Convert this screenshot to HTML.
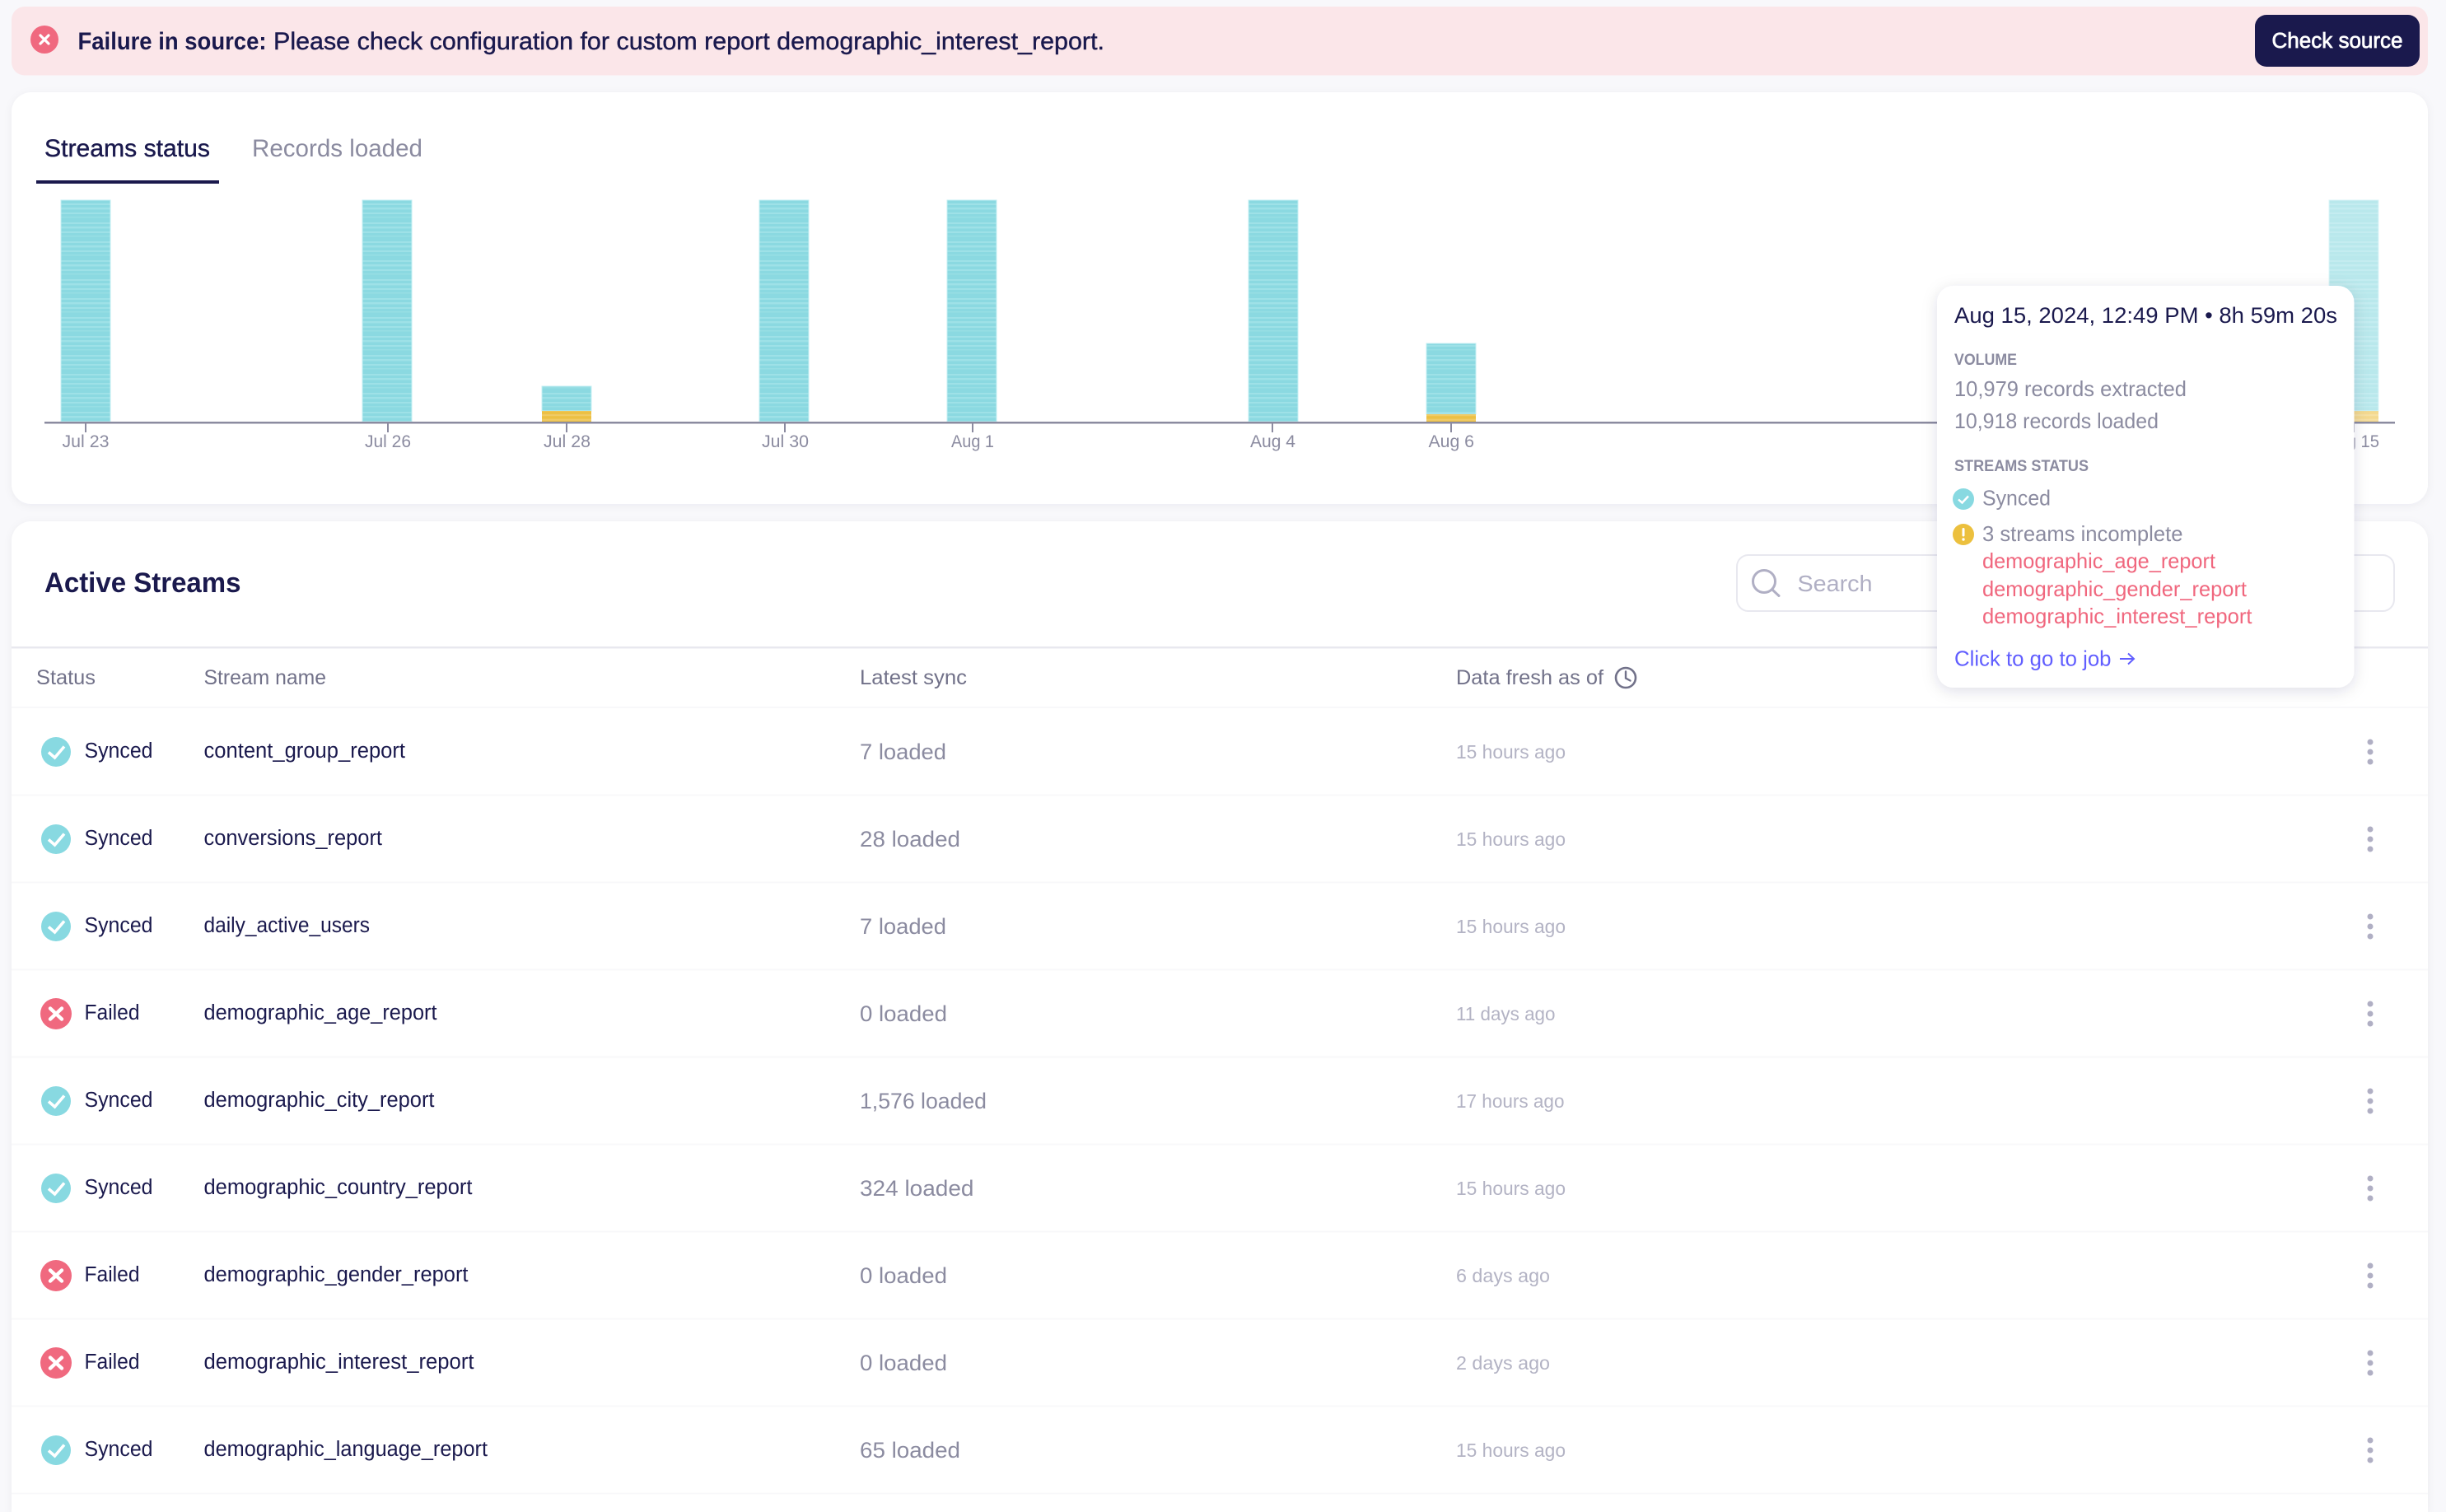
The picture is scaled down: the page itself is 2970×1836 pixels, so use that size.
<!DOCTYPE html>
<html lang="en">
<head>
<meta charset="utf-8">
<title>Active Streams</title>
<style>
html,body{margin:0;padding:0;width:2970px;height:1836px;overflow:hidden;background:#f8f8fb}
svg{display:block}
text{font-family:"Liberation Sans",sans-serif;white-space:pre}
.n{fill:#1a194d;font-size:25.5px}
.h{fill:#717189;font-size:25px}
.l{fill:#8b8ba0;font-size:27px}
.f{fill:#b3b3c4;font-size:23.5px}
.a{fill:#8b8ba0;font-size:21.5px}
.c{fill:#8b8ba0;font-size:19px;font-weight:bold}
.t{fill:#8b8ba0;font-size:26px}
.r{fill:#f0677e;font-size:26px}
.m{stroke-width:.4px;stroke:#1a194d}
</style>
</head>
<body>
<svg width="2970" height="1836" viewBox="0 0 2970 1836" xmlns="http://www.w3.org/2000/svg">
<defs>
<pattern id="tp" patternUnits="userSpaceOnUse" width="60" height="23" y="243">
<rect width="60" height="23" fill="#8bd9e1"/>
<rect y="4" width="60" height="2" fill="#9ee1e7"/>
<rect y="9" width="60" height="2.500" fill="#9ee1e7"/>
<rect y="15" width="60" height="2" fill="#9ee1e7"/>
<rect y="20" width="60" height="1.500" fill="#97dee4"/>
</pattern>
<pattern id="yp" patternUnits="userSpaceOnUse" width="60" height="5.6" y="242">
<rect width="60" height="5.6" fill="#ecc044"/><rect y="3.4" width="60" height="2.2" fill="#f0cb66"/>
</pattern>
<filter id="s1" x="-5%" y="-10%" width="110%" height="120%"><feDropShadow dx="0" dy="2" stdDeviation="5" flood-color="#1a194d" flood-opacity=".05"/></filter>
<filter id="s2" x="-10%" y="-10%" width="120%" height="120%"><feDropShadow dx="0" dy="4" stdDeviation="9" flood-color="#1a194d" flood-opacity=".13"/></filter>
<g id="ok"><circle cx="68" cy="913" r="18" fill="#88d9e1"/><path d="M59 913.5L66.5 920L78 906.5" fill="none" stroke="#fff" stroke-width="3.6"/></g>
<g id="no"><circle cx="68" cy="913" r="19" fill="#f0697f"/><path d="M61 906.5L75 919.5M75 906.5L61 919.5" fill="none" stroke="#fff" stroke-width="4.4" stroke-linecap="round"/></g>
<g id="dt" fill="#b0afc4"><circle cx="2878" cy="901" r="3.5"/><circle cx="2878" cy="913" r="3.5"/><circle cx="2878" cy="925" r="3.5"/></g>
</defs>

<rect width="2970" height="1836" fill="#f8f8fb"/>

<!-- banner -->
<rect x="14" y="8" width="2934" height="83.500" rx="16" fill="#fbe6e9"/>
<circle cx="54" cy="48" r="17" fill="#f0697f"/>
<path d="M49 43L59 53M59 43L49 53" fill="none" stroke="#fff" stroke-width="3.2" stroke-linecap="round"/>
<text x="94.500" y="60" font-size="29.500" font-weight="bold" fill="#1a194d" textLength="229" lengthAdjust="spacingAndGlyphs">Failure in source:</text>
<text x="332" y="60" font-size="29.500" fill="#1a194d" class="m" textLength="1009" lengthAdjust="spacingAndGlyphs">Please check configuration for custom report demographic_interest_report.</text>
<rect x="2738" y="18" width="200" height="63" rx="14" fill="#1a194d"/>
<text x="2758.500" y="58" font-size="25.500" fill="#fff" stroke="#fff" stroke-width=".7" textLength="159" lengthAdjust="spacingAndGlyphs">Check source</text>

<!-- chart card -->
<rect x="14" y="112" width="2934" height="500" rx="24" fill="#fff" filter="url(#s1)"/>
<text x="54" y="190" font-size="29.500" fill="#1a194d" class="m" textLength="201" lengthAdjust="spacingAndGlyphs">Streams status</text>
<text x="306" y="190" font-size="29.500" fill="#8b8ba0" textLength="207" lengthAdjust="spacingAndGlyphs">Records loaded</text>
<rect x="44" y="219" width="222" height="4" fill="#1a194d"/>

<g stroke="#c4eff3" stroke-width="1">
<rect x="74" y="243" width="60" height="269" fill="url(#tp)"/>
<rect x="440" y="243" width="60" height="269" fill="url(#tp)"/>
<rect x="658" y="469" width="60" height="30" fill="url(#tp)"/>
<rect x="922" y="243" width="60" height="269" fill="url(#tp)"/>
<rect x="1150" y="243" width="60" height="269" fill="url(#tp)"/>
<rect x="1516" y="243" width="60" height="269" fill="url(#tp)"/>
<rect x="1732" y="417" width="60" height="86" fill="url(#tp)"/>
<rect x="2828" y="243" width="60" height="256" fill="url(#tp)" opacity=".6"/>
</g>
<rect x="658" y="499" width="60" height="13" fill="url(#yp)"/>
<rect x="1732" y="503" width="60" height="9" fill="url(#yp)"/>
<rect x="2828" y="499" width="60" height="13" fill="url(#yp)" opacity=".6"/>

<rect x="54" y="512" width="2854" height="2.500" fill="#8b8ba0"/>
<g fill="#8b8ba0">
<rect x="103" y="514" width="2" height="11"/><rect x="470" y="514" width="2" height="11"/><rect x="687" y="514" width="2" height="11"/><rect x="952" y="514" width="2" height="11"/><rect x="1180" y="514" width="2" height="11"/><rect x="1544" y="514" width="2" height="11"/><rect x="1761" y="514" width="2" height="11"/><rect x="2857" y="514" width="2" height="11"/>
</g>
<text class="a" x="75.500" y="543" textLength="57" lengthAdjust="spacingAndGlyphs">Jul 23</text>
<text class="a" x="443" y="543" textLength="56" lengthAdjust="spacingAndGlyphs">Jul 26</text>
<text class="a" x="660" y="543" textLength="57" lengthAdjust="spacingAndGlyphs">Jul 28</text>
<text class="a" x="925" y="543" textLength="57" lengthAdjust="spacingAndGlyphs">Jul 30</text>
<text class="a" x="1155" y="543" textLength="52" lengthAdjust="spacingAndGlyphs">Aug 1</text>
<text class="a" x="1518" y="543" textLength="55" lengthAdjust="spacingAndGlyphs">Aug 4</text>
<text class="a" x="1734.500" y="543" textLength="55.500" lengthAdjust="spacingAndGlyphs">Aug 6</text>
<text class="a" x="2825" y="543" textLength="64" lengthAdjust="spacingAndGlyphs">Aug 15</text>

<!-- table card -->
<path d="M14 1836V657a24 24 0 0 1 24-24H2924a24 24 0 0 1 24 24V1836Z" fill="#fff" filter="url(#s1)"/>
<text x="54" y="719" font-size="34.500" font-weight="bold" fill="#1a194d" textLength="238.500" lengthAdjust="spacingAndGlyphs">Active Streams</text>

<rect x="2109" y="674" width="798" height="68" rx="14" fill="#fff" stroke="#e8e8ef" stroke-width="2"/>
<circle cx="2142" cy="706" r="13.500" fill="none" stroke="#b0afc4" stroke-width="3"/>
<path d="M2152 716L2160 723.500" stroke="#b0afc4" stroke-width="3" stroke-linecap="round"/>
<text x="2182.500" y="718" font-size="28px" fill="#b0afc4" textLength="91" lengthAdjust="spacingAndGlyphs">Search</text>

<rect x="14" y="785" width="2934" height="2.500" fill="#e8e8ef"/>
<g fill="#f8f8fa">
<rect x="14" y="858" width="2934" height="2"/><rect x="14" y="964.500" width="2934" height="2"/><rect x="14" y="1070.500" width="2934" height="2"/><rect x="14" y="1176.500" width="2934" height="2"/><rect x="14" y="1282.500" width="2934" height="2"/><rect x="14" y="1388.500" width="2934" height="2"/><rect x="14" y="1494.500" width="2934" height="2"/><rect x="14" y="1600.500" width="2934" height="2"/><rect x="14" y="1706.500" width="2934" height="2"/><rect x="14" y="1812.500" width="2934" height="2"/>
</g>

<text class="h" x="44" y="831" textLength="72" lengthAdjust="spacingAndGlyphs">Status</text>
<text class="h" x="247.500" y="831" textLength="148.500" lengthAdjust="spacingAndGlyphs">Stream name</text>
<text class="h" x="1044" y="831" textLength="130" lengthAdjust="spacingAndGlyphs">Latest sync</text>
<text class="h" x="1768" y="831" textLength="179" lengthAdjust="spacingAndGlyphs">Data fresh as of</text>
<circle cx="1974" cy="823" r="12" fill="none" stroke="#717189" stroke-width="2.600"/>
<path d="M1974 815.500V823.500L1979.500 826.500" fill="none" stroke="#717189" stroke-width="2.400" stroke-linecap="round"/>

<!-- row 1 -->
<use href="#ok"/><use href="#dt"/>
<text class="n" x="102.500" y="920" textLength="83" lengthAdjust="spacingAndGlyphs">Synced</text>
<text class="n" x="247.500" y="920" textLength="244.500" lengthAdjust="spacingAndGlyphs">content_group_report</text>
<text class="l" x="1044" y="922" textLength="105" lengthAdjust="spacingAndGlyphs">7 loaded</text>
<text class="f" x="1768" y="921" textLength="133" lengthAdjust="spacingAndGlyphs">15 hours ago</text>
<!-- row 2 -->
<use href="#ok" y="106"/><use href="#dt" y="106"/>
<text class="n" x="102.500" y="1026" textLength="83" lengthAdjust="spacingAndGlyphs">Synced</text>
<text class="n" x="247.500" y="1026" textLength="216.500" lengthAdjust="spacingAndGlyphs">conversions_report</text>
<text class="l" x="1044" y="1028" textLength="122" lengthAdjust="spacingAndGlyphs">28 loaded</text>
<text class="f" x="1768" y="1027" textLength="133" lengthAdjust="spacingAndGlyphs">15 hours ago</text>
<!-- row 3 -->
<use href="#ok" y="212"/><use href="#dt" y="212"/>
<text class="n" x="102.500" y="1132" textLength="83" lengthAdjust="spacingAndGlyphs">Synced</text>
<text class="n" x="247.500" y="1132" textLength="201.500" lengthAdjust="spacingAndGlyphs">daily_active_users</text>
<text class="l" x="1044" y="1134" textLength="105" lengthAdjust="spacingAndGlyphs">7 loaded</text>
<text class="f" x="1768" y="1133" textLength="133" lengthAdjust="spacingAndGlyphs">15 hours ago</text>
<!-- row 4 -->
<use href="#no" y="318"/><use href="#dt" y="318"/>
<text class="n" x="102.500" y="1238" textLength="67" lengthAdjust="spacingAndGlyphs">Failed</text>
<text class="n" x="247.500" y="1238" textLength="283" lengthAdjust="spacingAndGlyphs">demographic_age_report</text>
<text class="l" x="1044" y="1240" textLength="106" lengthAdjust="spacingAndGlyphs">0 loaded</text>
<text class="f" x="1768" y="1239" textLength="120.500" lengthAdjust="spacingAndGlyphs">11 days ago</text>
<!-- row 5 -->
<use href="#ok" y="424"/><use href="#dt" y="424"/>
<text class="n" x="102.500" y="1344" textLength="83" lengthAdjust="spacingAndGlyphs">Synced</text>
<text class="n" x="247.500" y="1344" textLength="280" lengthAdjust="spacingAndGlyphs">demographic_city_report</text>
<text class="l" x="1044" y="1346" textLength="154" lengthAdjust="spacingAndGlyphs">1,576 loaded</text>
<text class="f" x="1768" y="1345" textLength="131.500" lengthAdjust="spacingAndGlyphs">17 hours ago</text>
<!-- row 6 -->
<use href="#ok" y="530"/><use href="#dt" y="530"/>
<text class="n" x="102.500" y="1450" textLength="83" lengthAdjust="spacingAndGlyphs">Synced</text>
<text class="n" x="247.500" y="1450" textLength="326" lengthAdjust="spacingAndGlyphs">demographic_country_report</text>
<text class="l" x="1044" y="1452" textLength="138.500" lengthAdjust="spacingAndGlyphs">324 loaded</text>
<text class="f" x="1768" y="1451" textLength="133" lengthAdjust="spacingAndGlyphs">15 hours ago</text>
<!-- row 7 -->
<use href="#no" y="636"/><use href="#dt" y="636"/>
<text class="n" x="102.500" y="1556" textLength="67" lengthAdjust="spacingAndGlyphs">Failed</text>
<text class="n" x="247.500" y="1556" textLength="321" lengthAdjust="spacingAndGlyphs">demographic_gender_report</text>
<text class="l" x="1044" y="1558" textLength="106" lengthAdjust="spacingAndGlyphs">0 loaded</text>
<text class="f" x="1768" y="1557" textLength="114" lengthAdjust="spacingAndGlyphs">6 days ago</text>
<!-- row 8 -->
<use href="#no" y="742"/><use href="#dt" y="742"/>
<text class="n" x="102.500" y="1662" textLength="67" lengthAdjust="spacingAndGlyphs">Failed</text>
<text class="n" x="247.500" y="1662" textLength="328" lengthAdjust="spacingAndGlyphs">demographic_interest_report</text>
<text class="l" x="1044" y="1664" textLength="106" lengthAdjust="spacingAndGlyphs">0 loaded</text>
<text class="f" x="1768" y="1663" textLength="114" lengthAdjust="spacingAndGlyphs">2 days ago</text>
<!-- row 9 -->
<use href="#ok" y="848"/><use href="#dt" y="848"/>
<text class="n" x="102.500" y="1768" textLength="83" lengthAdjust="spacingAndGlyphs">Synced</text>
<text class="n" x="247.500" y="1768" textLength="344.500" lengthAdjust="spacingAndGlyphs">demographic_language_report</text>
<text class="l" x="1044" y="1770" textLength="122" lengthAdjust="spacingAndGlyphs">65 loaded</text>
<text class="f" x="1768" y="1769" textLength="133" lengthAdjust="spacingAndGlyphs">15 hours ago</text>

<!-- tooltip -->
<rect x="2352" y="347" width="506.500" height="488" rx="20" fill="#fff" filter="url(#s2)"/>
<text x="2373" y="392" font-size="27px" fill="#1a194d" textLength="465" lengthAdjust="spacingAndGlyphs">Aug 15, 2024, 12:49 PM • 8h 59m 20s</text>
<text class="c" x="2373" y="443" textLength="76" lengthAdjust="spacingAndGlyphs">VOLUME</text>
<text class="t" x="2373" y="481" textLength="282" lengthAdjust="spacingAndGlyphs">10,979 records extracted</text>
<text class="t" x="2373" y="520" textLength="248" lengthAdjust="spacingAndGlyphs">10,918 records loaded</text>
<text class="c" x="2373" y="572" textLength="163" lengthAdjust="spacingAndGlyphs">STREAMS STATUS</text>
<circle cx="2384" cy="606" r="13" fill="#88d9e1"/>
<path d="M2378 606.500L2382.500 610.500L2390 602.500" fill="none" stroke="#fff" stroke-width="2.500"/>
<text class="t" x="2407" y="613.500" textLength="83" lengthAdjust="spacingAndGlyphs">Synced</text>
<circle cx="2384" cy="649" r="13" fill="#ecc03e"/>
<path d="M2384 642.500V650" stroke="#fff" stroke-width="3" stroke-linecap="round"/>
<circle cx="2384" cy="655" r="1.700" fill="#fff"/>
<text class="t" x="2407" y="657" textLength="243.500" lengthAdjust="spacingAndGlyphs">3 streams incomplete</text>
<text class="r" x="2407" y="690" textLength="283" lengthAdjust="spacingAndGlyphs">demographic_age_report</text>
<text class="r" x="2407" y="724" textLength="321" lengthAdjust="spacingAndGlyphs">demographic_gender_report</text>
<text class="r" x="2407" y="757" textLength="327.500" lengthAdjust="spacingAndGlyphs">demographic_interest_report</text>
<text x="2373" y="808.500" font-size="26px" fill="#615eff" textLength="190.500" lengthAdjust="spacingAndGlyphs">Click to go to job</text>
<path d="M2574 800H2591M2584 793.500L2591 800L2584 806.500" fill="none" stroke="#615eff" stroke-width="2"/>
</svg>
</body>
</html>
